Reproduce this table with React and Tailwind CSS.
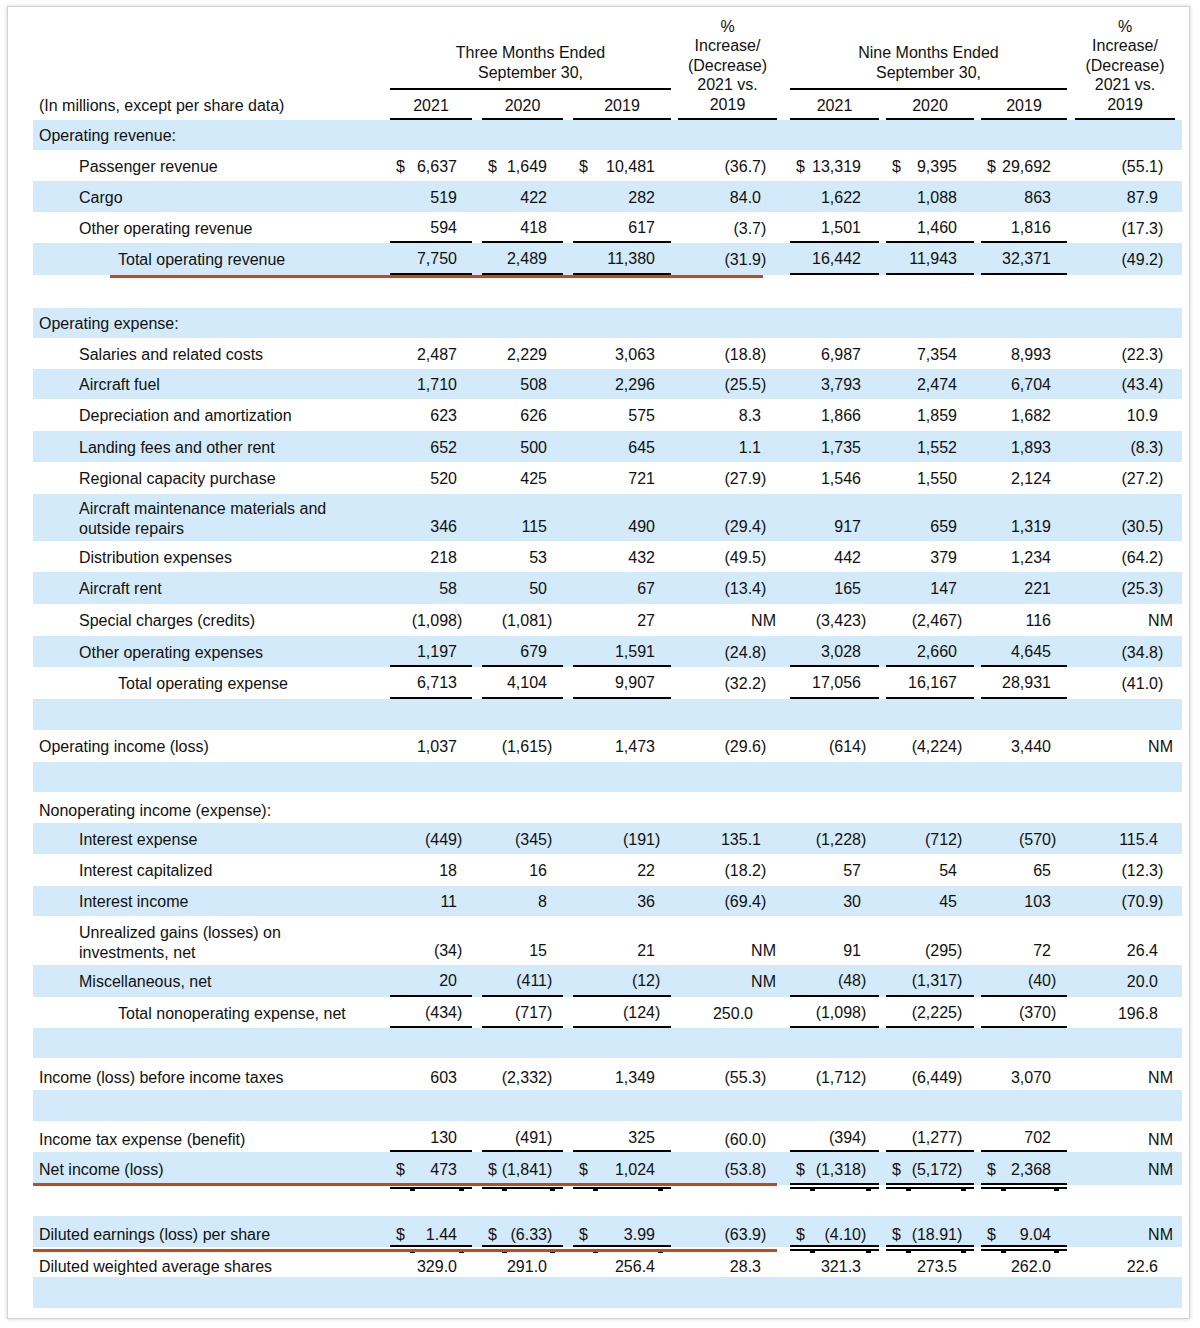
import React from 'react';

const COLS = [
  'w-[82px]',
  'ml-[10px] w-[81px]',
  'ml-[10px] w-[98px]',
  'ml-[7px] w-[99px]',
  'ml-[13px] w-[89px]',
  'ml-[7px] w-[88px]',
  'ml-[7px] w-[86px]',
  'ml-[8px] w-[100px]',
];
const PR = ['pr-[15px]', 'pr-[16px]', 'pr-[16px]', 'pr-[16px]', 'pr-[18px]', 'pr-[17px]', 'pr-[16px]', 'pr-[17px]'];
const PR_NM = ['pr-[15px]', 'pr-[16px]', 'pr-[16px]', 'pr-[1px]', 'pr-[18px]', 'pr-[17px]', 'pr-[16px]', 'pr-[2px]'];
const INDENT = ['pl-[6px]', 'pl-[46px]', 'pl-[85px]'];
const NUMCOLS = [0, 1, 2, 4, 5, 6];

const R = (label, lvl, shade, h, vals, opts = {}) => ({ label, lvl, shade, h, vals, ...opts });

const ROWS = [
  R('Operating revenue:', 0, true, 'h-[30px]', null),
  R('Passenger revenue', 1, false, 'h-[31px]', ['$6,637', '$1,649', '$10,481', '(36.7)', '$13,319', '$9,395', '$29,692', '(55.1)']),
  R('Cargo', 1, true, 'h-[31px]', ['519', '422', '282', '84.0', '1,622', '1,088', '863', '87.9']),
  R('Other operating revenue', 1, false, 'h-[31px]', ['594', '418', '617', '(3.7)', '1,501', '1,460', '1,816', '(17.3)'], { ul: true }),
  R('Total operating revenue', 2, true, 'h-[32px]', ['7,750', '2,489', '11,380', '(31.9)', '16,442', '11,943', '32,371', '(49.2)'], { ul: true, orange: 'rev' }),
  R('', 0, false, 'h-[33px]', null),
  R('Operating expense:', 0, true, 'h-[30px]', null),
  R('Salaries and related costs', 1, false, 'h-[31px]', ['2,487', '2,229', '3,063', '(18.8)', '6,987', '7,354', '8,993', '(22.3)']),
  R('Aircraft fuel', 1, true, 'h-[30px]', ['1,710', '508', '2,296', '(25.5)', '3,793', '2,474', '6,704', '(43.4)']),
  R('Depreciation and amortization', 1, false, 'h-[32px]', ['623', '626', '575', '8.3', '1,866', '1,859', '1,682', '10.9']),
  R('Landing fees and other rent', 1, true, 'h-[31px]', ['652', '500', '645', '1.1', '1,735', '1,552', '1,893', '(8.3)']),
  R('Regional capacity purchase', 1, false, 'h-[32px]', ['520', '425', '721', '(27.9)', '1,546', '1,550', '2,124', '(27.2)']),
  R(['Aircraft maintenance materials and', 'outside repairs'], 1, true, 'h-[47px]', ['346', '115', '490', '(29.4)', '917', '659', '1,319', '(30.5)']),
  R('Distribution expenses', 1, false, 'h-[31px]', ['218', '53', '432', '(49.5)', '442', '379', '1,234', '(64.2)']),
  R('Aircraft rent', 1, true, 'h-[32px]', ['58', '50', '67', '(13.4)', '165', '147', '221', '(25.3)']),
  R('Special charges (credits)', 1, false, 'h-[32px]', ['(1,098)', '(1,081)', '27', 'NM', '(3,423)', '(2,467)', '116', 'NM']),
  R('Other operating expenses', 1, true, 'h-[31px]', ['1,197', '679', '1,591', '(24.8)', '3,028', '2,660', '4,645', '(34.8)'], { ul: true }),
  R('Total operating expense', 2, false, 'h-[32px]', ['6,713', '4,104', '9,907', '(32.2)', '17,056', '16,167', '28,931', '(41.0)'], { ul: true }),
  R('', 0, true, 'h-[31px]', null),
  R('Operating income (loss)', 0, false, 'h-[32px]', ['1,037', '(1,615)', '1,473', '(29.6)', '(614)', '(4,224)', '3,440', 'NM']),
  R('', 0, true, 'h-[30px]', null),
  R('Nonoperating income (expense):', 0, false, 'h-[31px]', null, { low: true }),
  R('Interest expense', 1, true, 'h-[31px]', ['(449)', '(345)', '(191)', '135.1', '(1,228)', '(712)', '(570)', '115.4']),
  R('Interest capitalized', 1, false, 'h-[32px]', ['18', '16', '22', '(18.2)', '57', '54', '65', '(12.3)']),
  R('Interest income', 1, true, 'h-[30px]', ['11', '8', '36', '(69.4)', '30', '45', '103', '(70.9)']),
  R(['Unrealized gains (losses) on', 'investments, net'], 1, false, 'h-[49px]', ['(34)', '15', '21', 'NM', '91', '(295)', '72', '26.4']),
  R('Miscellaneous, net', 1, true, 'h-[32px]', ['20', '(411)', '(12)', 'NM', '(48)', '(1,317)', '(40)', '20.0'], { ul: true }),
  R('Total nonoperating expense, net', 2, false, 'h-[31px]', ['(434)', '(717)', '(124)', '250.0', '(1,098)', '(2,225)', '(370)', '196.8'], { ul: true, shift: true }),
  R('', 0, true, 'h-[30px]', null),
  R('Income (loss) before income taxes', 0, false, 'h-[32px]', ['603', '(2,332)', '1,349', '(55.3)', '(1,712)', '(6,449)', '3,070', 'NM'], { low: true }),
  R('', 0, true, 'h-[31px]', null),
  R('Income tax expense (benefit)', 0, false, 'h-[31px]', ['130', '(491)', '325', '(60.0)', '(394)', '(1,277)', '702', 'NM'], { ul: true, low: true }),
  R('Net income (loss)', 0, true, 'h-[33px]', ['$473', '$(1,841)', '$1,024', '(53.8)', '$(1,318)', '$(5,172)', '$2,368', 'NM'], { dbl: true, orange: 'full' }),
  R('', 0, false, 'h-[31px]', null),
  R('Diluted earnings (loss) per share', 0, true, 'h-[31px]', ['$1.44', '$(6.33)', '$3.99', '(63.9)', '$(4.10)', '$(18.91)', '$9.04', 'NM'], { dbl: true, orange: 'eps', low: true }),
  R('Diluted weighted average shares', 0, false, 'h-[30px]', ['329.0', '291.0', '256.4', '28.3', '321.3', '273.5', '262.0', '22.6'], { bottom: true }),
  R('', 0, true, 'h-[31px]', null),
];

function Cell({ v, i, row }) {
  let s = v || '';
  let dollar = false;
  if (s.startsWith('$')) {
    dollar = true;
    s = s.slice(1);
  }
  const nm = s === 'NM';
  const paren = s.endsWith(')');
  const isNum = NUMCOLS.includes(i);
  const ul = row.ul && isNum;
  const dbl = row.dbl && isNum;
  let align = 'items-center pt-[2px]';
  if (Array.isArray(row.label)) align = 'items-end pb-[4px]';
  else if (row.low) align = 'items-end pb-[2px]';
  else if (row.bottom) align = 'items-end pb-[0px]';
  let pr = nm ? PR_NM[i] : PR[i];
  if (row.shift && i === 3) pr = 'pr-[24px]';
  return (
    <div className={`relative flex h-full ${align} ${COLS[i]} ${ul ? 'border-b-2 border-black' : ''}`}>
      {dollar && <span className="pl-[6px]">$</span>}
      <span className={`ml-auto whitespace-nowrap ${pr}`}>
        {paren ? (
          <>
            {s.slice(0, -1)}
            <span className="inline-block w-0">)</span>
          </>
        ) : (
          s
        )}
      </span>
      {dbl && (
        <div className="absolute left-0 right-0 bottom-[-4px] z-10 h-[6px] border-y-2 border-black">
          <div className="absolute left-[20px] bottom-[-4px] h-[4px] w-[5px] bg-black" />
          <div className="absolute right-[8px] bottom-[-4px] h-[4px] w-[5px] bg-black" />
        </div>
      )}
    </div>
  );
}

function Row({ row }) {
  const two = Array.isArray(row.label);
  let labelAlign = 'items-center pt-[2px]';
  if (two) labelAlign = 'items-end pb-[2px]';
  else if (row.low) labelAlign = 'items-end pb-[2px]';
  else if (row.bottom) labelAlign = 'items-end pb-[0px]';
  return (
    <div className={`relative flex w-[1149px] ${row.h} ${row.shade ? 'bg-[#d3eafa]' : 'bg-white'}`}>
      <div className={`flex h-full w-[357px] ${labelAlign} ${INDENT[row.lvl]}`}>
        {two ? (
          <div>
            <div>{row.label[0]}</div>
            <div>{row.label[1]}</div>
          </div>
        ) : (
          <span className="whitespace-nowrap">{row.label}</span>
        )}
      </div>
      {row.vals && row.vals.map((v, i) => <Cell key={i} v={v} i={i} row={row} />)}
      {row.orange === 'rev' && <div className="absolute left-[77px] bottom-[-3px] z-20 h-[3px] w-[653px] bg-[#c5481b]" />}
      {row.orange === 'full' && <div className="absolute left-0 bottom-[-1px] z-20 h-[3px] w-[744px] bg-[#c5481b]" />}
      {row.orange === 'eps' && <div className="absolute left-0 bottom-[-5px] z-20 h-[3px] w-[744px] bg-[#c5481b]" />}
    </div>
  );
}

function Group({ title, cols, className }) {
  return (
    <div className={`flex flex-col ${className}`}>
      <div className="mb-[5px] text-center">
        <div>{title[0]}</div>
        <div>{title[1]}</div>
      </div>
      <div className="h-[2px] w-full bg-black" />
      <div className="flex">
        {cols.map((c, i) => (
          <div key={i} className={`border-b-2 border-black pt-[6px] pb-[2px] text-center ${c.cls}`}>
            {c.y}
          </div>
        ))}
      </div>
    </div>
  );
}

function Pct({ className }) {
  return (
    <div className={`border-b-2 border-black pb-[4px] text-center leading-[19.5px] ${className}`}>
      <div>%</div>
      <div>Increase/</div>
      <div>(Decrease)</div>
      <div>2021 vs.</div>
      <div>2019</div>
    </div>
  );
}

export default function App() {
  return (
    <div className="h-[1328px] w-[1200px] overflow-hidden bg-white pt-[6px] pl-[7px] font-['Liberation_Sans',Arial,sans-serif] text-[16px] leading-[20px] text-[#111111]">
      <div className="h-[1313px] w-[1183px] border border-[#d2d2d2] bg-white pl-[25px] shadow-[0_0_4px_rgba(0,0,0,0.18)]">
        <div className="flex h-[113px] w-[1149px] items-end">
          <div className="w-[357px] pb-[4px] pl-[6px] whitespace-nowrap">(In millions, except per share data)</div>
          <Group
            title={['Three Months Ended', 'September 30,']}
            className="w-[281px]"
            cols={[
              { y: '2021', cls: 'w-[82px]' },
              { y: '2020', cls: 'ml-[10px] w-[81px]' },
              { y: '2019', cls: 'ml-[10px] w-[98px]' },
            ]}
          />
          <Pct className="ml-[7px] w-[99px]" />
          <Group
            title={['Nine Months Ended', 'September 30,']}
            className="ml-[13px] w-[277px]"
            cols={[
              { y: '2021', cls: 'w-[89px]' },
              { y: '2020', cls: 'ml-[7px] w-[88px]' },
              { y: '2019', cls: 'ml-[7px] w-[86px]' },
            ]}
          />
          <Pct className="ml-[8px] w-[100px]" />
        </div>
        {ROWS.map((r, i) => (
          <Row key={i} row={r} />
        ))}
      </div>
    </div>
  );
}
